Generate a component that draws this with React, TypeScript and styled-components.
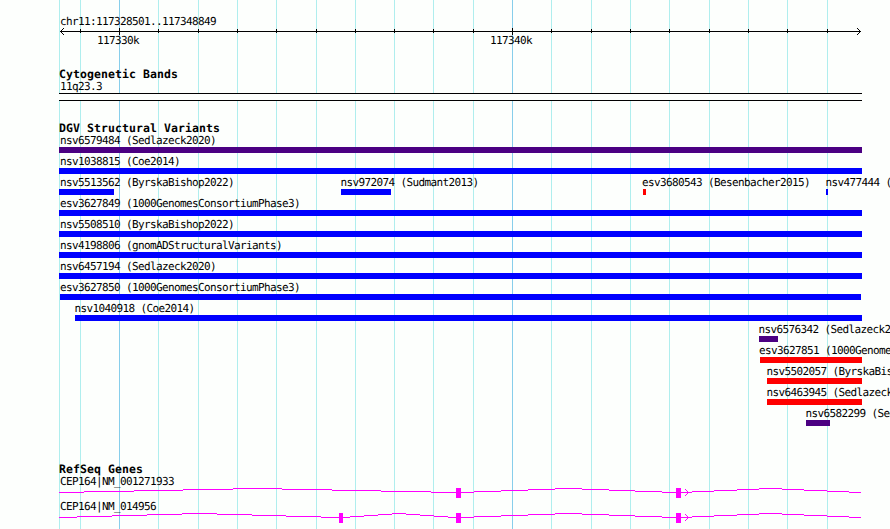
import { FC } from "react";
import styled, { createGlobalStyle } from "styled-components";

const GlobalStyle = createGlobalStyle`
  body {
    margin: 0;
    background: #fdfffd;
    overflow: hidden;
  }
`;

const LEFT = 59;
const MINOR = [59, 80, 158, 198, 237, 276, 316, 355, 394, 433, 473, 551, 591, 630, 669, 709, 748, 787, 827];
const MAJOR = [119, 512];

const Browser = styled.main`
  position: relative;
  box-sizing: border-box;
  width: 890px;
  height: 529px;
  padding: 15px 0 0 ${LEFT}px;
  overflow: hidden;
  background: #fdfffd;
  color: #000;
  font: 11px/14px "DejaVu Sans Mono", monospace;
  letter-spacing: -0.622px;
  font-variant-ligatures: none;
  text-rendering: geometricPrecision;
  white-space: pre;
`;

const GridLines = styled.svg`
  position: absolute;
  inset: 0;
  width: 890px;
  height: 529px;
  shape-rendering: crispEdges;
`;

const Tracks = styled.div`
  position: relative;
  display: flex;
  flex-direction: column;
`;

const Label = styled.div<{ $indent?: number }>`
  height: 12px;
  margin-left: ${({ $indent }) => $indent ?? 1}px;
`;

const Drawing = styled.svg`
  display: block;
  overflow: visible;
  shape-rendering: crispEdges;
`;

const Track = styled.section<{ $gap: number }>`
  margin-top: ${({ $gap }) => $gap}px;
`;

const Title = styled.h2`
  margin: 0;
  height: 12px;
  font-size: 11.5px;
  line-height: 12px;
  font-weight: 700;
  letter-spacing: 0.077px;
`;

const Band = styled.div`
  box-sizing: border-box;
  width: 803px;
  height: 8px;
  margin-top: 1px;
  border: solid #000;
  border-width: 1px 0;
  background: #fdfffd;
`;

const Scale = styled.div`
  display: grid;
  height: 12px;
  margin-top: -2px;
`;

const Row = styled.div`
  display: grid;
  height: 21px;
`;

const Feature = styled.div<{ $start: number }>`
  grid-area: 1 / 1;
  margin-left: ${({ $start }) => $start - LEFT}px;
`;

const Bar = styled.div<{ $width: number; $color: string }>`
  width: ${({ $width }) => $width}px;
  height: 6px;
  margin-top: 1px;
  background: ${({ $color }) => $color};
`;

const Gene = styled.div`
  height: 25px;
`;

interface IVariant {
  name: string;
  start: number;
  end: number;
  color: string;
  indent?: number;
}

const GAIN = "#0000ff";
const LOSS = "#ff0000";
const COMPLEX = "#4b0082";

const variants: IVariant[][] = [
  [{ name: "nsv6579484 (Sedlazeck2020)", start: 59, end: 862, color: COMPLEX }],
  [{ name: "nsv1038815 (Coe2014)", start: 59, end: 862, color: GAIN }],
  [
    { name: "nsv5513562 (ByrskaBishop2022)", start: 59, end: 114, color: GAIN },
    { name: "nsv972074 (Sudmant2013)", start: 341, end: 391, color: GAIN, indent: -0.6 },
    { name: "esv3680543 (Besenbacher2015)", start: 643, end: 646, color: LOSS, indent: -1 },
    { name: "nsv477444 (Sudmant2013)", start: 826, end: 828, color: GAIN, indent: -0.6 },
  ],
  [{ name: "esv3627849 (1000GenomesConsortiumPhase3)", start: 59, end: 862, color: GAIN }],
  [{ name: "nsv5508510 (ByrskaBishop2022)", start: 59, end: 862, color: GAIN }],
  [{ name: "nsv4198806 (gnomADStructuralVariants)", start: 59, end: 862, color: GAIN }],
  [{ name: "nsv6457194 (Sedlazeck2020)", start: 59, end: 862, color: GAIN }],
  [{ name: "esv3627850 (1000GenomesConsortiumPhase3)", start: 60, end: 861, color: GAIN, indent: 0 }],
  [{ name: "nsv1040918 (Coe2014)", start: 75, end: 862, color: GAIN, indent: -0.6 }],
  [{ name: "nsv6576342 (Sedlazeck2020)", start: 759, end: 778, color: COMPLEX, indent: -0.6 }],
  [{ name: "esv3627851 (1000GenomesConsortiumPhase3)", start: 760, end: 862, color: LOSS, indent: -1 }],
  [{ name: "nsv5502057 (ByrskaBishop2022)", start: 767, end: 862, color: LOSS, indent: -0.6 }],
  [{ name: "nsv6463945 (Sedlazeck2020)", start: 767, end: 862, color: LOSS, indent: -0.6 }],
  [{ name: "nsv6582299 (Sedlazeck2020)", start: 806, end: 830, color: COMPLEX, indent: -0.6 }],
];

// x of every one pixel step of an intron, rising to its middle and falling back
const SHARED_INTRONS = [
  [461, 474, 501, 528, 555, 582, 609, 635, 662, 676],
  [681, 692, 714, 737, 759, 782, 804, 827, 849, 861],
];

const genes = [
  {
    name: "CEP164|NM_001271933",
    exons: [[456, 5], [676, 5]],
    introns: [[59, 84, 134, 183, 233, 282, 332, 381, 431, 456], ...SHARED_INTRONS],
  },
  {
    name: "CEP164|NM_014956",
    exons: [[339, 4], [456, 5], [676, 5]],
    introns: [
      [59, 77, 112, 147, 182, 217, 252, 286, 321, 339],
      [343, 350, 364, 378, 392, 406, 420, 434, 448, 456],
      ...SHARED_INTRONS,
    ],
  },
];

const Ruler: FC = () => (
  <Drawing width="803" height="9" viewBox="59 27 803 9" fill="#000">
    <rect x="60" y="31" width="801" height="1" />
    {[...MINOR.slice(1), ...MAJOR].map((x) => (
      <rect
        key={x}
        x={x}
        y={MAJOR.includes(x) ? 28 : 29}
        width="1"
        height={MAJOR.includes(x) ? 7 : 4}
      />
    ))}
    <path d="M61 30h1v1h-1zM62 29h1v1h-1zM63 28h1v1h-1zM61 32h1v1h-1zM62 33h1v1h-1zM63 34h1v1h-1z" />
    <path d="M859 30h1v1h-1zM858 29h1v1h-1zM857 28h1v1h-1zM859 32h1v1h-1zM858 33h1v1h-1zM857 34h1v1h-1z" />
  </Drawing>
);

const App: FC = () => {
  return (
    <>
      <GlobalStyle />
      <Browser>
        <GridLines>
          {MINOR.map((x) => (
            <rect key={x} x={x} width="1" height="529" fill="#afeeee" />
          ))}
          {MAJOR.map((x) => (
            <rect key={x} x={x} width="1" height="529" fill="#87ceeb" />
          ))}
        </GridLines>
        <Tracks>
          <Label>chr11:117328501..117348849</Label>
          <Ruler />
          <Scale>
            <Feature $start={97}>117330k</Feature>
            <Feature $start={490}>117340k</Feature>
          </Scale>

          <Track $gap={22}>
            <Title>Cytogenetic Bands</Title>
            <Label>11q23.3</Label>
            <Band />
          </Track>

          <Track $gap={21}>
            <Title>DGV Structural Variants</Title>
            {variants.map((row) => (
              <Row key={row[0].name}>
                {row.map(({ name, start, end, color, indent }) => (
                  <Feature key={name} $start={start}>
                    <Label $indent={indent}>{name}</Label>
                    <Bar $width={end - start} $color={color} />
                  </Feature>
                ))}
              </Row>
            ))}
          </Track>

          <Track $gap={35}>
            <Title>RefSeq Genes</Title>
            {genes.map(({ name, exons, introns }) => (
              <Gene key={name}>
                <Label>{name}</Label>
                <Drawing width="803" height="10" viewBox="59 -1 803 10" fill="#ff00ff">
                  {introns.map((steps) =>
                    steps.slice(1).map((x, i) => (
                      <rect key={x} x={steps[i]} y={Math.abs(i - 4)} width={x - steps[i]} height="1" />
                    ))
                  )}
                  {exons.map(([x, width]) => (
                    <rect key={x} x={x} y="0" width={width} height="10" />
                  ))}
                  <path d="M685 1h1v1h-1zM686 2h1v1h-1zM687 3h1v1h-1zM688 4h1v1h-1zM687 5h1v1h-1zM686 6h1v1h-1zM685 7h1v1h-1z" />
                </Drawing>
              </Gene>
            ))}
          </Track>
        </Tracks>
      </Browser>
    </>
  );
};

export default App;
